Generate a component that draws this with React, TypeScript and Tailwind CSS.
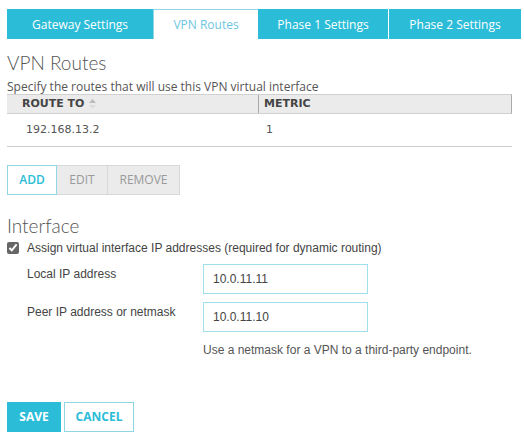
import React from 'react';

const TABS = ['Gateway Settings', 'VPN Routes', 'Phase 1 Settings', 'Phase 2 Settings'];

export default function App() {
  return (
    <div className="w-[524px] h-[440px] bg-white text-[#555] font-['Open_Sans',sans-serif] overflow-hidden">
      {/* Tabs */}
      <div className="flex pt-[9px] pl-[7px] h-[39px] text-[12px]">
        <div className="w-[146px] bg-[#2bbcd8] text-white flex items-center justify-center pt-[1px]">{TABS[0]}</div>
        <div className="w-[105px] bg-white border-t border-l border-[#8fd6e6] text-[#6ec6e0] flex items-center justify-center">{TABS[1]}</div>
        <div className="w-[131px] bg-[#2bbcd8] text-white flex items-center justify-center border-r border-white pt-[1px]">{TABS[2]}</div>
        <div className="w-[132px] bg-[#2bbcd8] text-white flex items-center justify-center pt-[1px]">{TABS[3]}</div>
      </div>

      <div className="px-[7px]">
        <h2 className="mt-[12px] text-[19px] leading-[24px] font-light font-['Lato',sans-serif] text-[#555]">VPN Routes</h2>
        <p className="text-[12px] leading-[14px] mt-[5px] text-[#555]">Specify the routes that will use this VPN virtual interface</p>

        {/* Table */}
        <div className="w-[505px] font-['DejaVu_Sans',sans-serif]">
          <div className="flex h-[20px] bg-[#ebebeb] border-t border-b border-[#d0d0d0] text-[11px] font-bold text-[#444] border-r border-r-[#aaa]">
            <div className="w-[252px] pl-[15px] flex items-center gap-1 border-r border-[#aaa]">
              ROUTE TO
              <svg width="7" height="10" viewBox="0 0 7 10" className="ml-[1px]">
                <path d="M3.5 0 L7 4 L0 4 Z" fill="#bbb" />
                <path d="M3.5 10 L7 6 L0 6 Z" fill="#ddd" />
              </svg>
            </div>
            <div className="pl-[5px] flex items-center">METRIC</div>
          </div>
          <div className="flex h-[33px] border-b border-[#ccc] text-[11px] text-[#555] items-center">
            <div className="w-[252px] pl-[19px]">192.168.13.2</div>
            <div className="pl-[7px]">1</div>
          </div>
        </div>

        {/* Actions */}
        <div className="flex mt-[18px] text-[12px]">
          <button className="w-[50px] h-[30px] border border-[#8fd6e6] bg-white text-[#2bbcd8] font-semibold">ADD</button>
          <button className="w-[51px] h-[30px] border border-l-0 border-[#d8d8d8] bg-[#ebebeb] text-[#999]">EDIT</button>
          <button className="w-[72px] h-[30px] border border-l-0 border-[#d8d8d8] bg-[#ebebeb] text-[#999]">REMOVE</button>
        </div>

        <h2 className="mt-[19px] text-[19px] leading-[24px] font-light font-['Lato',sans-serif] text-[#555]">Interface</h2>

        <div className="font-['Liberation_Sans',sans-serif] text-[12px] text-[#444]">
          <label className="flex items-center mt-[3px] h-[14px]">
            <input type="checkbox" defaultChecked className="w-[12px] h-[12px] m-0 accent-[#666]" />
            <span className="ml-[8px]">Assign virtual interface IP addresses (required for dynamic routing)</span>
          </label>

          <div className="flex mt-[9px] pl-[20px]">
            <div className="w-[176px] pt-[1px]">Local IP address</div>
            <input
              readOnly
              value="10.0.11.11"
              className="w-[165px] h-[30px] border border-[#9edfeb] px-[9px] text-[12px] text-[#444] outline-none"
            />
          </div>
          <div className="flex mt-[8px] pl-[20px]">
            <div className="w-[176px] pt-[1px]">Peer IP address or netmask</div>
            <input
              readOnly
              value="10.0.11.10"
              className="w-[165px] h-[30px] border border-[#9edfeb] px-[9px] text-[12px] text-[#444] outline-none"
            />
          </div>
          <p className="ml-[196px] mt-[9px] text-[#555]">Use a netmask for a VPN to a third-party endpoint.</p>
        </div>

        <div className="flex gap-[3px] mt-[43px] text-[12px] font-bold">
          <button className="w-[54px] h-[30px] bg-[#2bbcd8] text-white">SAVE</button>
          <button className="w-[70px] h-[30px] border border-[#8fd6e6] bg-white text-[#2bbcd8]">CANCEL</button>
        </div>
      </div>
    </div>
  );
}
